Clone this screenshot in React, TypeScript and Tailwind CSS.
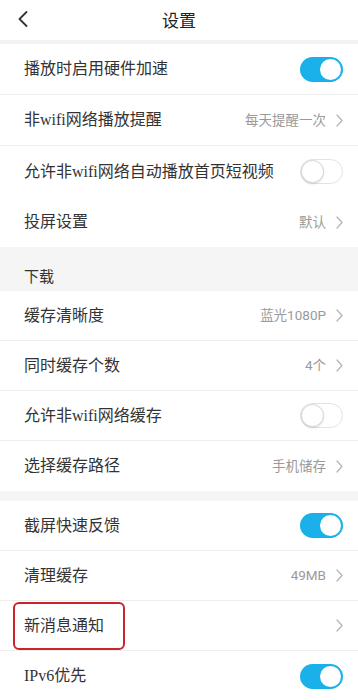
import React from 'react';

type Row = {
  label: string;
  value?: string;
  toggle?: boolean;
  on?: boolean;
  highlight?: boolean;
};

const labelFont = {
  fontFamily: '"Liberation Serif", "Noto Sans CJK SC", serif',
};

const Chevron = () => (
  <svg width="7" height="13" viewBox="0 0 7 13" fill="none" className="ml-[10px]">
    <polyline points="1,1 6,6.5 1,12" stroke="#b3b3b3" strokeWidth="1.2" strokeLinejoin="round" strokeLinecap="round" />
  </svg>
);

const Toggle = ({ on }: { on?: boolean }) =>
  on ? (
    <div className="flex h-[25px] w-[43px] items-center justify-end rounded-full bg-[#1ab0ea] pr-[2px]">
      <div className="h-[21px] w-[21px] rounded-full bg-white" />
    </div>
  ) : (
    <div className="flex h-[25px] w-[43px] items-center rounded-full border border-[#e3e3e3] bg-white">
      <div className="h-[23px] w-[23px] rounded-full border border-[#d6d6d6] bg-white shadow-[0_1px_2px_rgba(0,0,0,0.12)]" />
    </div>
  );

const SettingRow = ({ row, border, h }: { row: Row; border: boolean; h: string }) => (
  <div className={`relative flex items-center bg-white pl-[24px] pr-[15px] ${h} ${border ? 'border-b border-[#eeeeee]' : ''}`}>
    <span className="flex-1 text-[16px] text-[#333333]" style={labelFont}>
      {row.label}
    </span>
    {row.toggle ? (
      <Toggle on={row.on} />
    ) : (
      <div className="flex items-center">
        {row.value && (
          <span className="text-[13.5px] text-[#9a9a9a]" style={{ fontFamily: '"Roboto", "Noto Sans CJK SC", sans-serif' }}>
            {row.value}
          </span>
        )}
        <Chevron />
      </div>
    )}
    {row.highlight && (
      <div className="absolute left-[13px] top-[1px] h-[48px] w-[112px] rounded-[6px] border-2 border-[#c9232e]" />
    )}
  </div>
);

const playRows: Row[] = [
  { label: '播放时启用硬件加速', toggle: true, on: true },
  { label: '非wifi网络播放提醒', value: '每天提醒一次' },
  { label: '允许非wifi网络自动播放首页短视频', toggle: true },
  { label: '投屏设置', value: '默认' },
];

const downloadRows: Row[] = [
  { label: '缓存清晰度', value: '蓝光1080P' },
  { label: '同时缓存个数', value: '4个' },
  { label: '允许非wifi网络缓存', toggle: true },
  { label: '选择缓存路径', value: '手机储存' },
];

const otherRows: Row[] = [
  { label: '截屏快速反馈', toggle: true, on: true },
  { label: '清理缓存', value: '49MB' },
  { label: '新消息通知', highlight: true },
  { label: 'IPv6优先', toggle: true, on: true },
];

export default function App() {
  return (
    <div className="h-[700px] w-full overflow-hidden bg-[#f5f5f5]" style={{ fontFamily: '"Noto Sans CJK SC", sans-serif' }}>
      {/* header */}
      <div className="relative flex h-[40px] items-center justify-center bg-white">
        <svg width="10" height="16" viewBox="0 0 10 16" fill="none" className="absolute left-[18px] top-[11px]">
          <polyline points="8.5,1 1.5,8 8.5,15" stroke="#333" strokeWidth="1.8" strokeLinecap="round" strokeLinejoin="round" />
        </svg>
        <span className="text-[17px] text-[#222222]">设置</span>
      </div>
      <div className="h-[4px] bg-[#f2f2f2]" />

      {playRows.map((r, i) => (
        <SettingRow key={r.label} row={r} border={i < 2} h={i < 3 ? 'h-[51px]' : 'h-[50px]'} />
      ))}

      <div className="flex h-[44px] items-end pb-[4px] pl-[24px] text-[15px] text-[#333333]">下载</div>

      {downloadRows.map((r, i) => (
        <SettingRow key={r.label} row={r} border={i < 3} h="h-[50px]" />
      ))}

      <div className="h-[10px]" />

      {otherRows.map((r, i) => (
        <SettingRow key={r.label} row={r} border={i < 3} h="h-[50px]" />
      ))}
    </div>
  );
}
